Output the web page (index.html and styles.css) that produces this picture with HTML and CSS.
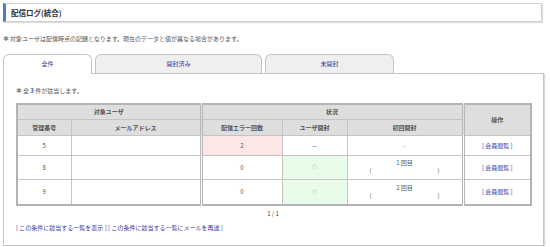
FILE: index.html
```html
<!DOCTYPE html>
<html lang="ja">
<head>
    <meta charset="UTF-8">
    <title>配信ログ(統合)</title>
    <link rel="stylesheet" href="styles.css">
</head>
<body>
    <div class="page">
        <h1 class="title">配信ログ(統合)</h1>

        <p class="note"><span class="mark">✱</span>対象ユーザは配信時点の記録となります。現在のデータと値が異なる場合があります。</p>

        <ul class="tabs">
            <li class="tab active"><a href="#">全件</a></li>
            <li class="tab tab-wide"><a href="#">開封済み</a></li>
            <li class="tab tab-mid"><a href="#">未開封</a></li>
        </ul>

        <div class="panel">
            <p class="count"><span class="mark">✱</span>全 <b>3</b> 件が該当します。</p>

            <table class="log">
                <colgroup>
                    <col style="width: 54px">
                    <col style="width: 130px">
                    <col style="width: 81px">
                    <col style="width: 65px">
                    <col style="width: 116px">
                    <col style="width: 68px">
                </colgroup>
                <thead>
                    <tr class="head-1">
                        <th colspan="2">対象ユーザ</th>
                        <th colspan="3" class="group">状況</th>
                        <th rowspan="2" class="group">操作</th>
                    </tr>
                    <tr class="head-2">
                        <th>管理番号</th>
                        <th>メールアドレス</th>
                        <th class="group">配信エラー回数</th>
                        <th>ユーザ開封</th>
                        <th>初回開封</th>
                    </tr>
                </thead>
                <tbody>
                    <tr class="row-short">
                        <td>5</td>
                        <td></td>
                        <td class="group error">2</td>
                        <td>－</td>
                        <td>-</td>
                        <td class="group"><a href="#">[ 会員閲覧 ]</a></td>
                    </tr>
                    <tr>
                        <td>8</td>
                        <td></td>
                        <td class="group">0</td>
                        <td class="opened">○</td>
                        <td>
                            <div class="first">1 回目</div>
                            <div class="stamp"><span>(</span><span>)</span></div>
                        </td>
                        <td class="group"><a href="#">[ 会員閲覧 ]</a></td>
                    </tr>
                    <tr class="row-last">
                        <td>9</td>
                        <td></td>
                        <td class="group">0</td>
                        <td class="opened">○</td>
                        <td>
                            <div class="first">2 回目</div>
                            <div class="stamp"><span>(</span><span>)</span></div>
                        </td>
                        <td class="group"><a href="#">[ 会員閲覧 ]</a></td>
                    </tr>
                </tbody>
            </table>

            <p class="pager">1 / 1</p>

            <p class="links">
                <a href="#">[ この条件に該当する一覧を表示 ]</a>
                <a href="#">[ この条件に該当する一覧にメールを再送 ]</a>
            </p>
        </div>
    </div>
</body>
</html>
```

FILE: styles.css
```css
* {
    margin: 0;
    padding: 0;
    box-sizing: border-box;
}

body {
    background: #fff;
    font-family: 'Noto Sans CJK JP', 'DejaVu Sans', sans-serif;
    font-size: 6px;
    color: #444;
}

a {
    color: #3a3aa8;
    text-decoration: none;
}

.page {
    padding: 3px 3px 0 3px;
    width: 547px;
}

.title {
    height: 19px;
    margin-right: 2px;
    padding-left: 5px;
    border: 1px solid #cfcfcf;
    border-left: 3px solid #4d7fc0;
    box-shadow: 1px 1px 1px rgba(0, 0, 0, 0.12);
    font-size: 7.5px;
    font-weight: bold;
    line-height: 17px;
    color: #333;
}

.note {
    margin-top: 12px;
    line-height: 8px;
    color: #555;
}

.mark {
    display: inline-block;
    width: 7px;
    font-size: 7px;
    font-weight: bold;
    color: #888;
}

.tabs {
    display: flex;
    gap: 3px;
    margin-top: 11px;
    list-style: none;
    height: 19px;
}

.tab {
    width: 89px;
    height: 19px;
    border: 1px solid #c4c4c4;
    border-bottom: none;
    border-radius: 6px 6px 0 0;
    background: #efefef;
    text-align: center;
    line-height: 18px;
}

.tab-wide {
    width: 167px;
}

.tab-mid {
    width: 129px;
}

.tab.active {
    background: #fff;
    height: 20px;
    position: relative;
    z-index: 1;
}

.panel {
    height: 173px;
    border: 1px solid #c4c4c4;
    box-shadow: 1px 1px 1px rgba(0, 0, 0, 0.15);
    padding: 12px 13px 0 12px;
}

.count {
    line-height: 8px;
    color: #555;
}

.count b {
    color: #2a66b5;
}

.log {
    margin-top: 8px;
    width: 514px;
    table-layout: fixed;
    border-collapse: collapse;
    border: 2px solid #b4b4b4;
    text-align: center;
}

.log th,
.log td {
    border: 1px solid #c4c4c4;
    padding: 0;
}

.log th {
    background: #dedede;
    font-weight: bold;
    color: #555;
}

.head-1 th {
    height: 15px;
}

.head-2 th {
    height: 16px;
}

.log td {
    height: 24px;
    color: #555;
}

.log .row-short td {
    height: 20px;
}

.log .row-last td {
    height: 26px;
}

.log .group {
    border-left: 3px double #b8b8b8;
}

.log td.error {
    background: #fde6e6;
}

.log td.opened {
    background: #e9fbe9;
    font-size: 4px;
}

.first {
    line-height: 8px;
}

.stamp {
    display: flex;
    justify-content: space-between;
    width: 70px;
    margin: 0 auto;
    line-height: 8px;
}

.pager {
    margin-top: 4px;
    text-align: center;
    line-height: 8px;
}

.links {
    margin-top: 6px;
    line-height: 8px;
}
```
